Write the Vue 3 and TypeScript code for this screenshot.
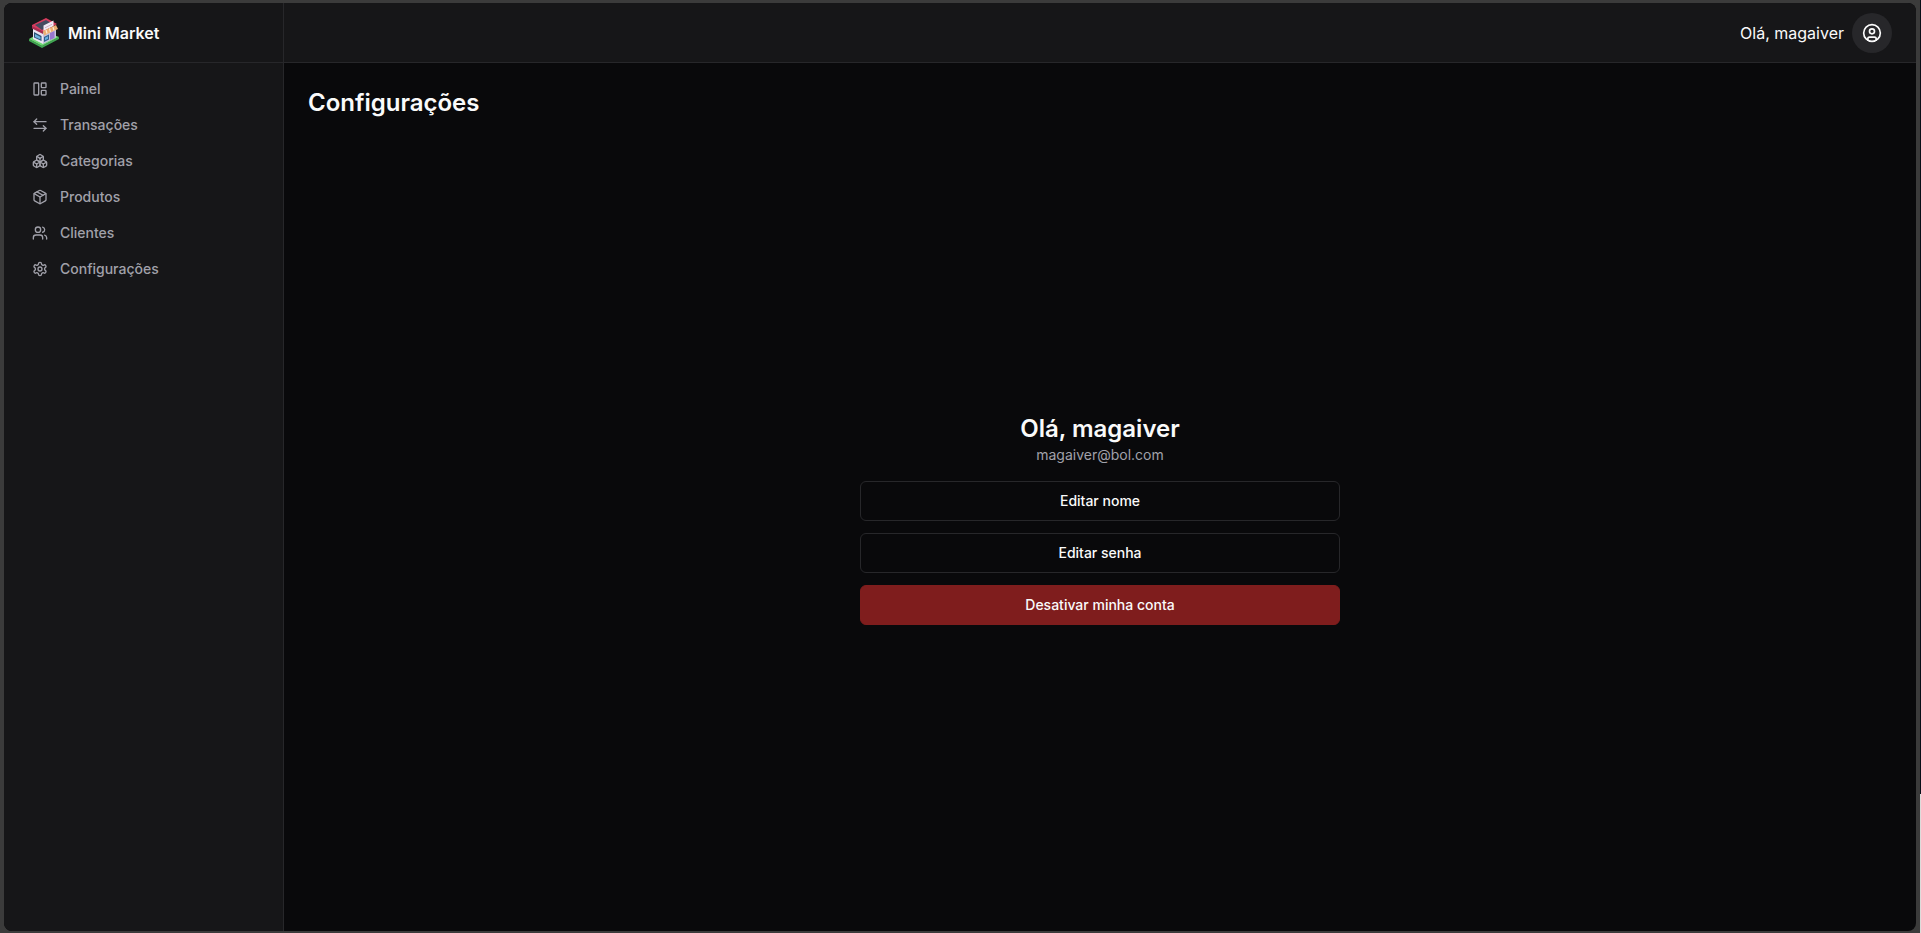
<script setup lang="ts">
interface NavItem {
  label: string
  paths: string[]
}

const user = { name: 'magaiver', email: 'magaiver@bol.com' }

const navItems: NavItem[] = [
  { label: 'Painel', paths: ['M4 3h5a1 1 0 0 1 1 1v16a1 1 0 0 1-1 1H4a1 1 0 0 1-1-1V4a1 1 0 0 1 1-1Z', 'M15 3h5a1 1 0 0 1 1 1v5a1 1 0 0 1-1 1h-5a1 1 0 0 1-1-1V4a1 1 0 0 1 1-1Z', 'M15 14h5a1 1 0 0 1 1 1v5a1 1 0 0 1-1 1h-5a1 1 0 0 1-1-1v-5a1 1 0 0 1 1-1Z'] },
  { label: 'Transações', paths: ['m7 3-4 4 4 4', 'M3 7h18', 'm17 21 4-4-4-4', 'M21 17H3'] },
  {
    label: 'Categorias',
    paths: [
      'M2.97 12.92A2 2 0 0 0 2 14.63v3.24a2 2 0 0 0 .97 1.71l3 1.8a2 2 0 0 0 2.06 0L12 19v-5.5l-5-3-4.03 2.42Z',
      'm7 16.5-4.74-2.85', 'm7 16.5 5-3', 'M7 16.5v5.17',
      'M12 13.5V19l3.97 2.38a2 2 0 0 0 2.06 0l3-1.8a2 2 0 0 0 .97-1.71v-3.24a2 2 0 0 0-.97-1.71L17 10.5l-5 3Z',
      'm17 16.5-5-3', 'm17 16.5 4.74-2.85', 'M17 16.5v5.17',
      'M7.97 4.42A2 2 0 0 0 7 6.13v4.37l5 3 5-3V6.13a2 2 0 0 0-.97-1.71l-3-1.8a2 2 0 0 0-2.06 0l-3 1.8Z',
      'M12 8 7.26 5.15', 'm12 8 4.74-2.85', 'M12 13.5V8',
    ],
  },
  {
    label: 'Produtos',
    paths: [
      'm7.5 4.27 9 5.15',
      'M21 8a2 2 0 0 0-1-1.73l-7-4a2 2 0 0 0-2 0l-7 4A2 2 0 0 0 3 8v8a2 2 0 0 0 1 1.73l7 4a2 2 0 0 0 2 0l7-4A2 2 0 0 0 21 16Z',
      'm3.3 7 8.7 5 8.7-5', 'M12 22V12',
    ],
  },
  {
    label: 'Clientes',
    paths: [
      'M16 21v-2a4 4 0 0 0-4-4H6a4 4 0 0 0-4 4v2',
      'M9 3a4 4 0 1 1 0 8a4 4 0 0 1 0-8',
      'M22 21v-2a4 4 0 0 0-3-3.87', 'M16 3.13a4 4 0 0 1 0 7.75',
    ],
  },
  {
    label: 'Configurações',
    paths: [
      'M12.22 2h-.44a2 2 0 0 0-2 2v.18a2 2 0 0 1-1 1.73l-.43.25a2 2 0 0 1-2 0l-.15-.08a2 2 0 0 0-2.73.73l-.22.38a2 2 0 0 0 .73 2.73l.15.1a2 2 0 0 1 1 1.72v.51a2 2 0 0 1-1 1.74l-.15.09a2 2 0 0 0-.73 2.73l.22.38a2 2 0 0 0 2.73.73l.15-.08a2 2 0 0 1 2 0l.43.25a2 2 0 0 1 1 1.73V20a2 2 0 0 0 2 2h.44a2 2 0 0 0 2-2v-.18a2 2 0 0 1 1-1.73l.43-.25a2 2 0 0 1 2 0l.15.08a2 2 0 0 0 2.73-.73l.22-.39a2 2 0 0 0-.73-2.73l-.15-.08a2 2 0 0 1-1-1.74v-.5a2 2 0 0 1 1-1.74l.15-.09a2 2 0 0 0 .73-2.73l-.22-.38a2 2 0 0 0-2.73-.73l-.15.08a2 2 0 0 1-2 0l-.43-.25a2 2 0 0 1-1-1.73V4a2 2 0 0 0-2-2z',
      'M12 9a3 3 0 1 1 0 6a3 3 0 0 1 0-6',
    ],
  },
]
</script>

<template>
  <div class="frame">
    <div class="window">
      <aside class="sidebar">
        <div class="bar brand-bar">
          <a class="brand" href="#">
            <svg class="logo" viewBox="0 0 32 32" aria-hidden="true">
              <path fill="#3fa652" d="m1 22 13 7 17-9v2l-17 9-13-7z" />
              <path fill="#6ed873" d="m1 22 14-8 16 6-17 9z" />
              <path fill="#e9e6f2" d="m5 11 10 5v11L5 22z" />
              <path fill="#c5c3de" d="m15 16 13-6v10.500L15 27z" />
              <path fill="#d63c5e" d="M4 8 18 1l11 6-14 8L4 10z" />
              <path fill="#a52d50" d="m4 9 11 5.500V17L4 11.500z" />
              <path fill="#464b60" d="m7 8 11-5 7 4-11 6z" />
              <path fill="#f2eaf4" d="m15.500 8.500 10-5V9l-10 5z" />
              <path fill="none" stroke="#c6a3bd" stroke-width=".8" d="m17 10.800 7-3.500" />
              <path fill="#edae72" d="m15 14 13-6 2 4-14 6.500z" />
              <path fill="none" stroke="#fbe9cf" stroke-width="1.200" d="m18 13 1 3.500m2.500-5 1 3.500m2.500-5 1 3.500" />
              <path fill="#2d5275" d="m6 15 7.500 4v5L6 20.500z" />
              <path fill="#6fb3dd" d="m7 17 5.500 3v2.500L7 20z" />
              <path fill="#2f5f8c" d="m16 20 5-2.500v5L16 25z" />
              <path fill="#6ab2e0" d="m17 20.700 3-1.500v2.500l-3 1.500z" />
              <path fill="#9877cf" d="m22 16 4.500-2v7L22 23z" />
            </svg>
            <span>Mini Market</span>
          </a>
        </div>
        <nav class="nav">
          <a v-for="item in navItems" :key="item.label" class="nav-link" href="#">
            <svg class="nav-icon" viewBox="0 0 24 24" aria-hidden="true">
              <path v-for="path in item.paths" :key="path" :d="path" />
            </svg>
            {{ item.label }}
          </a>
        </nav>
      </aside>
      <div class="page">
        <header class="bar user-bar">
          <span>Olá, {{ user.name }}</span>
          <button class="avatar" type="button" aria-label="Conta">
            <svg class="avatar-icon" viewBox="0 0 24 24" aria-hidden="true">
              <circle cx="12" cy="12" r="10" />
              <circle cx="12" cy="10" r="3" />
              <path d="M7 20.662V19a2 2 0 0 1 2-2h6a2 2 0 0 1 2 2v1.662" />
            </svg>
          </button>
        </header>
        <main class="content">
          <h1>Configurações</h1>
          <section class="account">
            <div class="identity">
              <h2>Olá, {{ user.name }}</h2>
              <p>{{ user.email }}</p>
            </div>
            <div class="actions">
              <button class="action" type="button">Editar nome</button>
              <button class="action" type="button">Editar senha</button>
              <button class="action danger" type="button">Desativar minha conta</button>
            </div>
          </section>
        </main>
      </div>
    </div>
  </div>
</template>

<style>
body {
  margin: 0;
  background: #3b3b3b;
}
</style>

<style scoped>
.frame {
  box-sizing: border-box;
  display: flex;
  min-height: 100vh;
  padding: 3px 4px 2px;
  border-right: 1px solid #080e18;
  border-image: linear-gradient(#080e18 85%, #dcdcda 85%) 1;
  background: #3b3b3b;
  color: #fafafa;
  font-family: Inter, sans-serif;
  font-size: 16px;
  line-height: 24px;
}
.window {
  flex: 1;
  display: grid;
  grid-template-columns: 280px 1fr;
  overflow: hidden;
  border-radius: 8px;
  background: #09090b;
}
.sidebar {
  border-right: 1px solid #27272a;
  background: #161618;
}
.bar {
  box-sizing: border-box;
  display: flex;
  align-items: center;
  height: 60px;
  padding: 0 24px;
  border-bottom: 1px solid #27272a;
  background: #161618;
}
.brand {
  display: flex;
  align-items: center;
  gap: 8px;
  color: inherit;
  font-weight: 600;
  text-decoration: none;
}
.logo {
  width: 32px;
  height: 32px;
}
.nav {
  display: grid;
  padding: 8px 16px;
}
.nav-link {
  display: flex;
  align-items: center;
  gap: 12px;
  padding: 8px 12px;
  color: #a1a1aa;
  font-size: 14px;
  font-weight: 500;
  line-height: 20px;
  text-decoration: none;
}
.nav-icon,
.avatar-icon {
  width: 16px;
  height: 16px;
  fill: none;
  stroke: currentColor;
  stroke-width: 2;
  stroke-linecap: round;
  stroke-linejoin: round;
}
.page {
  display: flex;
  flex-direction: column;
}
.user-bar {
  justify-content: flex-end;
  gap: 8px;
}
.avatar {
  display: flex;
  align-items: center;
  justify-content: center;
  width: 40px;
  height: 40px;
  padding: 0;
  border: 0;
  border-radius: 50%;
  background: #27272a;
  color: #fafafa;
}
.avatar-icon {
  width: 20px;
  height: 20px;
}
.content {
  flex: 1;
  display: flex;
  flex-direction: column;
  gap: 12px;
  padding: 24px;
}
h1,
h2,
p {
  margin: 0;
}
h1,
h2 {
  font-size: 24px;
  font-weight: 600;
  line-height: 32px;
}
.account {
  flex: 1;
  display: flex;
  flex-direction: column;
  align-items: center;
  justify-content: center;
  gap: 16px;
}
.identity {
  text-align: center;
}
.identity p {
  color: #a1a1aa;
  font-size: 14px;
  line-height: 20px;
}
.actions {
  display: grid;
  gap: 12px;
  width: 100%;
  max-width: 480px;
}
.action {
  height: 40px;
  border: 1px solid #27272a;
  border-radius: 6px;
  background: #09090b;
  color: #fafafa;
  font-family: inherit;
  font-size: 14px;
  font-weight: 500;
  line-height: 20px;
}
.danger {
  border-color: #7f1d1d;
  background: #7f1d1d;
}
</style>
